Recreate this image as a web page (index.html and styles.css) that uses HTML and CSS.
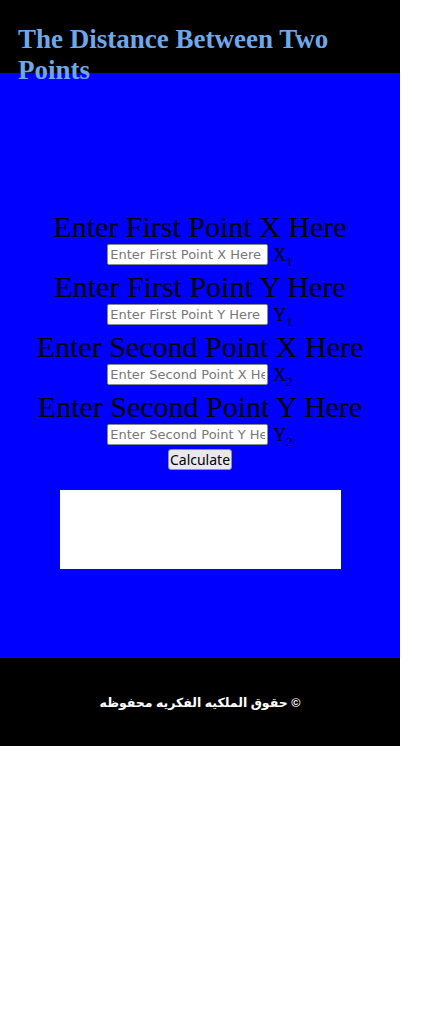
FILE: index.html
```html
<!DOCTYPE html>
<html>
<head>
<meta charset="utf-8">
<link rel="stylesheet" href="styles.css">
</head>
<body>
<div class="page">
  <header class="top">
    <h1 class="title">The Distance Between Two Points</h1>
  </header>
  <main class="main">
    <div class="field">
      <label class="label">Enter First Point X Here</label>
      <div class="row"><input class="inp" placeholder="Enter First Point X Here"><span class="var">X<sub>1</sub></span></div>
    </div>
    <div class="field">
      <label class="label">Enter First Point Y Here</label>
      <div class="row"><input class="inp" placeholder="Enter First Point Y Here"><span class="var">Y<sub>1</sub></span></div>
    </div>
    <div class="field">
      <label class="label">Enter Second Point X Here</label>
      <div class="row"><input class="inp" placeholder="Enter Second Point X Here"><span class="var">X<sub>2</sub></span></div>
    </div>
    <div class="field">
      <label class="label">Enter Second Point Y Here</label>
      <div class="row"><input class="inp" placeholder="Enter Second Point Y Here"><span class="var">Y<sub>2</sub></span></div>
    </div>
    <button class="btn">Calculate</button>
    <div class="result"></div>
  </main>
  <footer class="foot">
    <p class="copy" dir="rtl">© حقوق الملكيه الفكريه محفوظه</p>
  </footer>
</div>
</body>
</html>
```

FILE: styles.css
```css
html, body {
  margin: 0;
  padding: 0;
  background: #fff;
}
.page {
  width: 400px;
  font-family: "Liberation Serif", serif;
}
.top {
  background: #000;
  height: 73px;
  padding: 0 18px;
  box-sizing: border-box;
}
.title {
  margin: 0;
  padding-top: 24px;
  font-size: 27px;
  line-height: 31px;
  font-weight: bold;
  color: #6fa8ea;
  position: relative;
}
.main {
  background: #0000ff;
  height: 585px;
  box-sizing: border-box;
  padding-top: 137px;
  display: flex;
  flex-direction: column;
  align-items: center;
}
.field {
  display: flex;
  flex-direction: column;
  align-items: center;
}
.label {
  font-family: "Liberation Serif", serif;
  font-size: 30px;
  line-height: 33px;
  color: #000;
}
.row {
  display: flex;
  align-items: flex-start;
  height: 26px;
  padding-top: 1px;
}
.inp {
  width: 161px;
  height: 21px;
  box-sizing: border-box;
  border: 1px solid #8a8a8a;
  border-radius: 2px;
  padding: 0 2px;
  font-family: "DejaVu Sans", sans-serif;
  font-size: 13px;
  background: #fff;
}
.inp::placeholder {
  color: #777;
}
.var {
  margin-left: 5px;
  margin-top: 1px;
  font-family: "Liberation Serif", serif;
  font-size: 18px;
  color: #000;
  line-height: 20px;
}
.var sub {
  font-size: 13px;
}
.btn {
  margin-top: -1px;
  height: 21px;
  padding: 0 1px;
  font-family: "Noto Sans", sans-serif;
  font-size: 14px;
  background: #e9e9ed;
  border: 1px solid #8f8f9d;
  border-radius: 3px;
  color: #000;
  line-height: 18px;
}
.result {
  margin-top: 20px;
  width: 281px;
  height: 79px;
  background: #fff;
}
.foot {
  background: #000;
  height: 88px;
  display: flex;
  align-items: center;
  justify-content: center;
}
.copy {
  margin: 0;
  color: #fff;
  font-family: "Liberation Sans", "DejaVu Sans", sans-serif;
  font-weight: bold;
  font-size: 12.5px;
}
```
